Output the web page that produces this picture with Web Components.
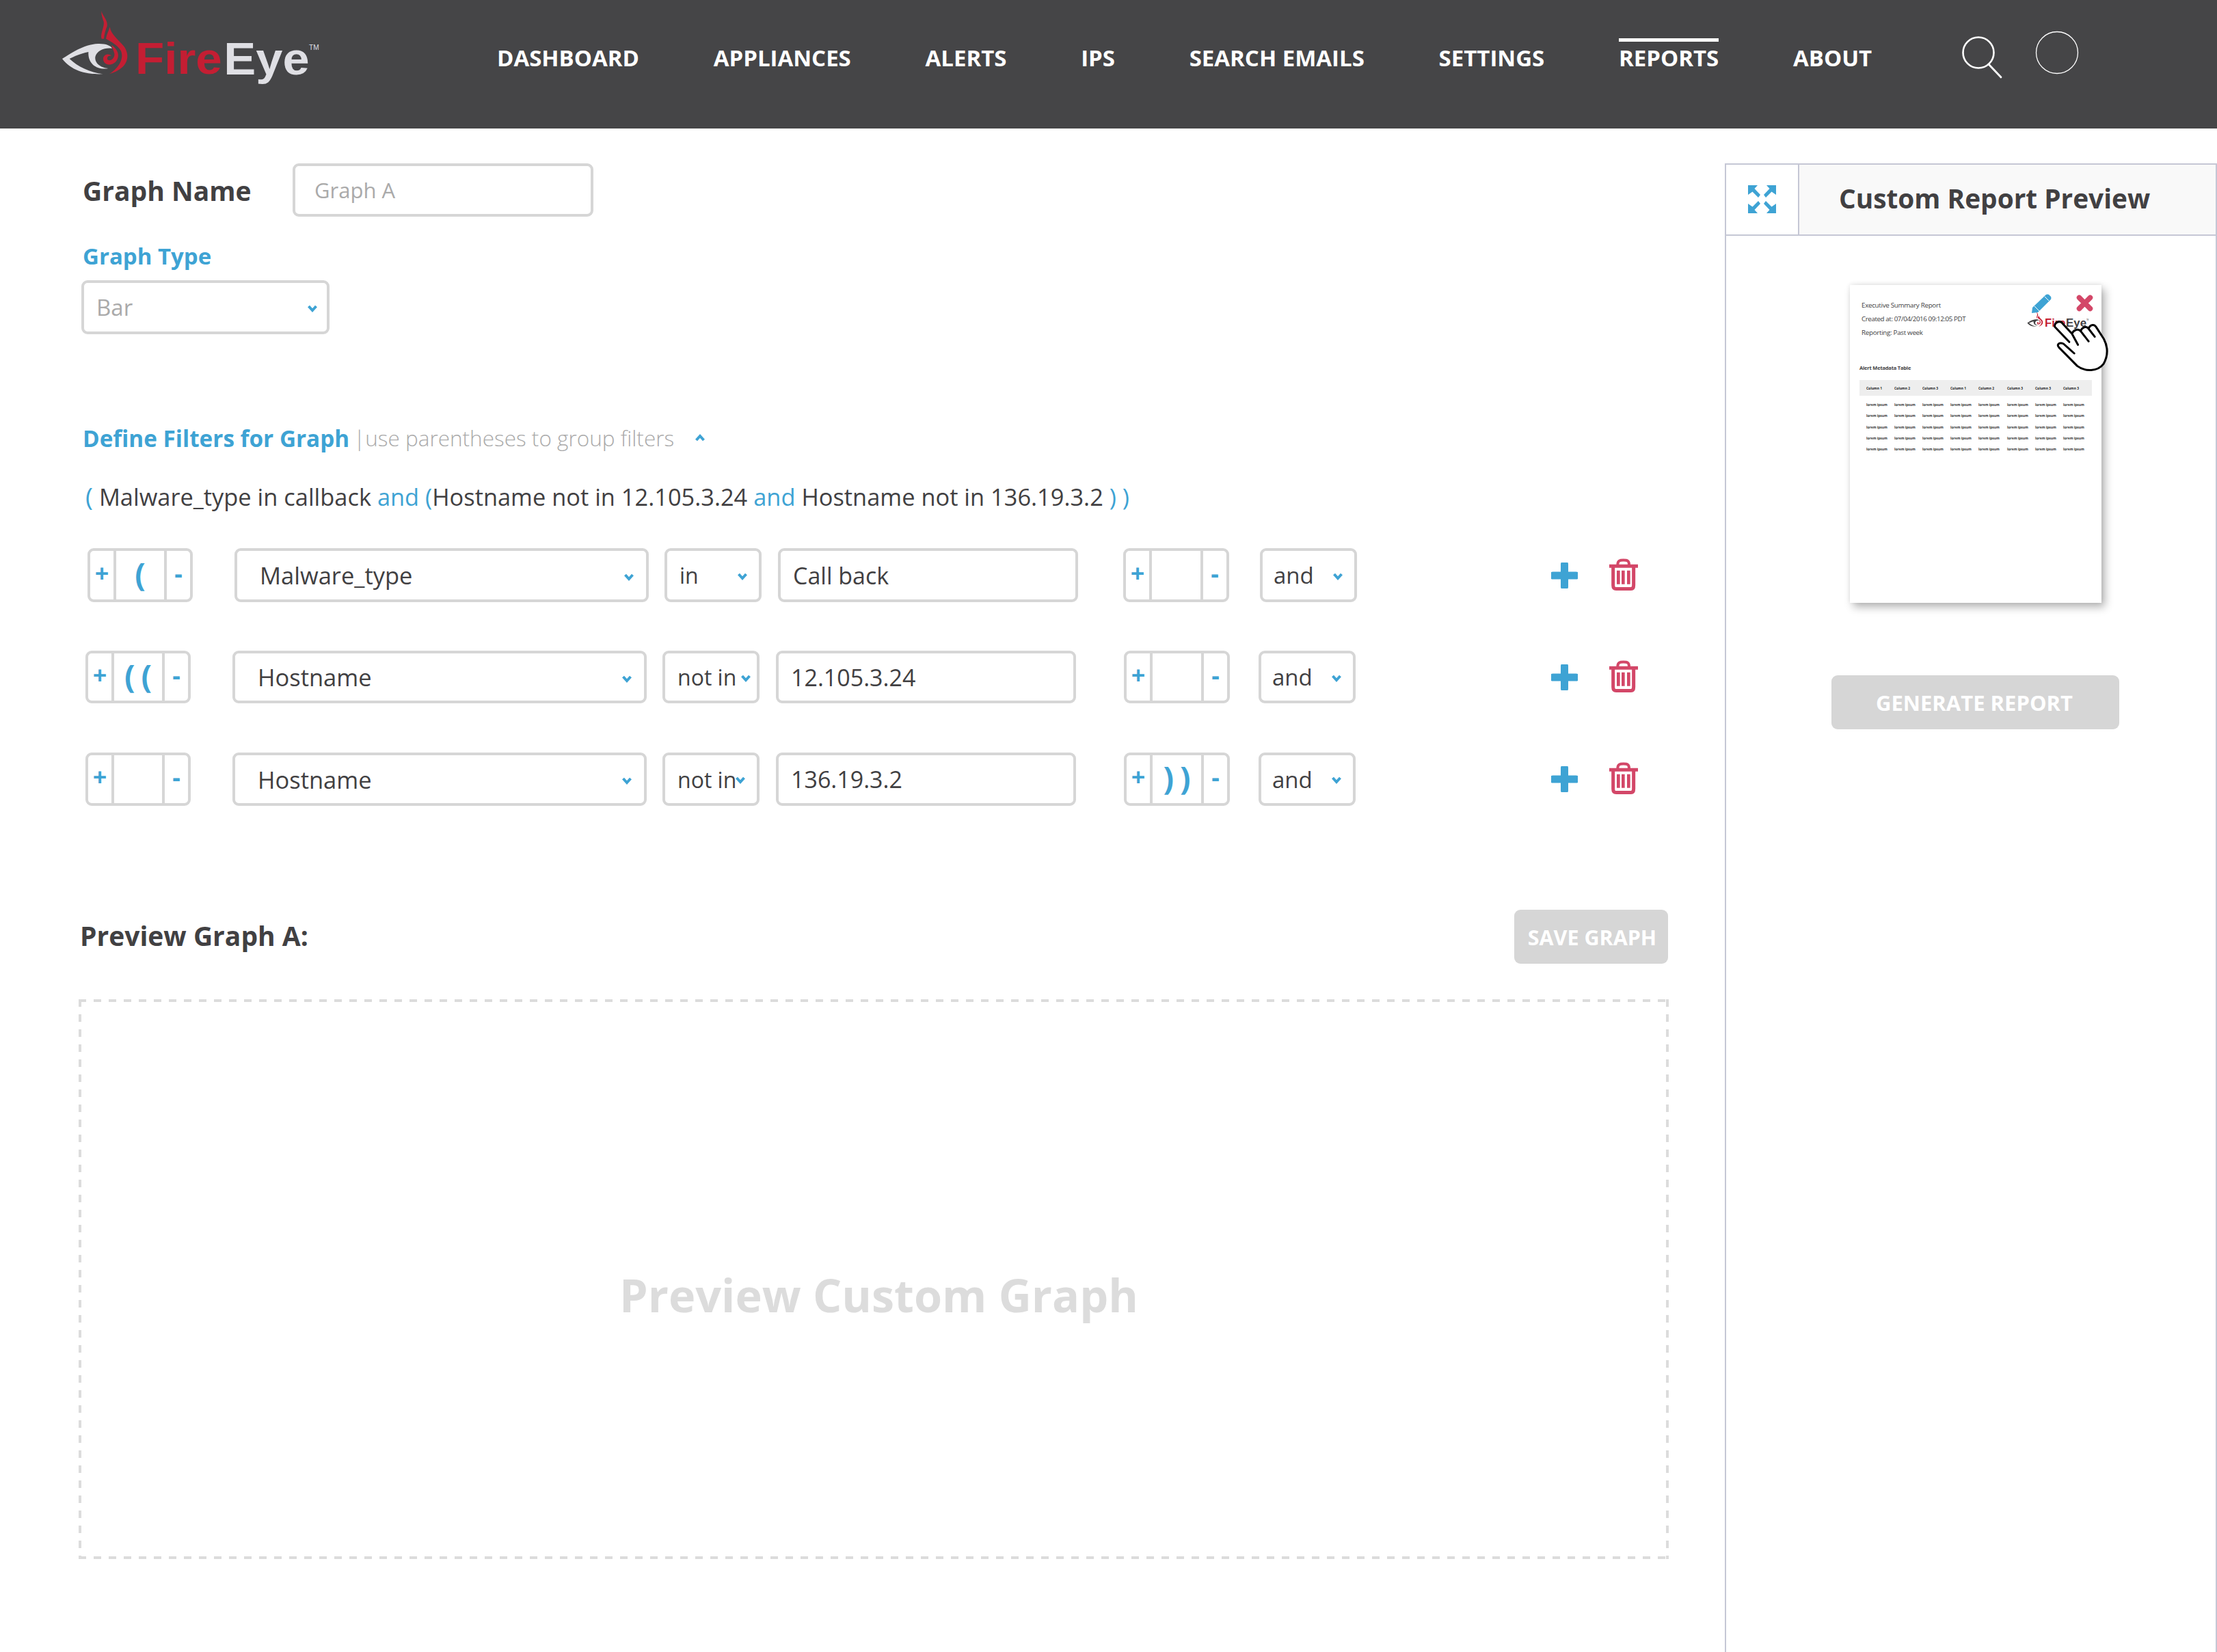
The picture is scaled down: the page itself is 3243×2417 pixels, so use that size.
<!DOCTYPE html>
<html>
<head>
<meta charset="utf-8">
<title>Custom Graph</title>
<style>
  html, body { margin: 0; padding: 0; height: 100%; background: #fff; overflow: hidden; }
  body { font-family: "Open Sans", "Liberation Sans", sans-serif; color: #414042; }
  .page { display: flex; height: calc(100vh - 188px); }
</style>
</head>
<body>
<fe-header></fe-header>
<div class="page">
  <fe-builder>
    <fe-filter-row indent="13" g1="66" g2="45" open="(" field="Malware_type" op="in" value="Call back" close="" top="0" h="79"></fe-filter-row>
    <fe-filter-row indent="10" g1="70" g2="42" open="((" field="Hostname" op="not in" caret="20" value="12.105.3.24" close="" top="71" h="77"></fe-filter-row>
    <fe-filter-row indent="10" g1="70" g2="42" open="" field="Hostname" op="not in" caret="28" value="136.19.3.2" close="))" top="72" h="78"></fe-filter-row>
  </fe-builder>
  <fe-preview-panel></fe-preview-panel>
</div>

<script>
// shared bits
const FONT = `"Open Sans", "Liberation Sans", sans-serif`;
const BLUE = '#3ea3d4';
const CHEVRON = `<svg width="14" height="11" viewBox="0 0 14 11"><path d="M1.5 2 L7 8 L12.5 2" fill="none" stroke="${BLUE}" stroke-width="4"/></svg>`;

class FeLogo extends HTMLElement {
  constructor() {
    super();
    this.attachShadow({ mode: 'open' });
    const eye = this.getAttribute('eye') || '#dfdfe4';
    const w = this.getAttribute('width') || 430;
    this.shadowRoot.innerHTML = `
      <style>
        :host { display: block; line-height: 0; }
        text { font-family: "Liberation Sans", Arial, sans-serif; }
      </style>
      <svg width="${w}" height="${w * 150 / 430}" viewBox="0 0 1290 450">
        <path fill="${eye}" d="M93 258 C130 235 185 195 250 192 C285 191 305 200 312 212 C280 208 245 220 238 250 C235 278 262 298 295 300 C250 308 205 285 208 228 C170 236 145 248 125 258 C160 292 215 318 272 325 C200 328 135 312 93 258Z"/>
        <path fill="#c41e33" d="M265 48 C270 70 295 90 290 115 C282 135 278 150 276 170 L266 170 C258 150 280 115 275 95 C270 80 264 65 265 48Z"/>
        <path fill="#c41e33" d="M302 118 C306 150 340 175 365 205 C392 245 385 300 300 325 C345 295 365 255 350 222 C335 195 300 180 285 170 C288 150 298 135 302 118Z"/>
        <path fill="#c41e33" d="M310 198 C335 215 345 240 335 260 C320 292 275 290 273 260 C272 240 295 232 310 245 C295 242 288 252 292 262 C305 272 325 255 322 235 C318 220 312 210 310 198Z"/>
        <text x="414" y="325" font-size="196" font-weight="700" textLength="380" lengthAdjust="spacingAndGlyphs" fill="#c41e33">Fire</text>
        <text x="802" y="328" font-size="202" font-weight="700" textLength="376" lengthAdjust="spacingAndGlyphs" fill="${eye}">Eye</text>
        <text x="1176" y="218" font-size="32" textLength="44" lengthAdjust="spacingAndGlyphs" fill="${eye}">TM</text>
      </svg>`;
  }
}
customElements.define('fe-logo', FeLogo);

class FeHeader extends HTMLElement {
  constructor() {
    super();
    this.attachShadow({ mode: 'open' });
    const items = ['DASHBOARD', 'APPLIANCES', 'ALERTS', 'IPS', 'SEARCH EMAILS', 'SETTINGS', 'REPORTS', 'ABOUT'];
    this.shadowRoot.innerHTML = `
      <style>
        :host { display: flex; height: 188px; background: #454547; color: #fff; font-family: ${FONT}; }
        fe-logo { margin-left: 60px; width: 430px; flex: none; }
        nav { display: flex; gap: 108.7px; margin-left: 237px; }
        a { display: block; height: 188px; box-sizing: border-box; padding-top: 62px; font-size: 33px; font-weight: 700; line-height: 46px; white-space: nowrap; position: relative; }
        a.on::before { content: ""; position: absolute; left: 0; right: 0; top: 56px; height: 5px; background: #fff; }
        .icons { display: flex; align-items: flex-start; margin-left: 132px; gap: 47px; padding-top: 45px; }
        svg { display: block; }
      </style>
      <fe-logo></fe-logo>
      <nav>${items.map(t => `<a class="${t === 'REPORTS' ? 'on' : ''}">${t}</a>`).join('')}</nav>
      <div class="icons">
        <svg width="60" height="68" viewBox="0 0 60 68" style="margin-top:8px"><circle cx="24" cy="24" r="22.5" fill="none" stroke="#fff" stroke-width="2.6"/><path d="M39 41 L57 60" stroke="#fff" stroke-width="2.8" stroke-linecap="round"/></svg>
        <svg width="64" height="64" viewBox="0 0 64 64"><circle cx="32" cy="32" r="30.5" fill="none" stroke="#fff" stroke-width="1.3"/></svg>
      </div>`;
  }
}
customElements.define('fe-header', FeHeader);

// boxed control: text input look, caret is optional
class FeBox extends HTMLElement {
  constructor() {
    super();
    this.attachShadow({ mode: 'open' });
    const caret = this.getAttribute('caret');
    this.shadowRoot.innerHTML = `
      <style>
        :host { display: flex; align-items: center; box-sizing: border-box; position: relative; border: 4px solid #d6d6d6; border-radius: 9px; background: #fff; font-size: 34.5px; color: #414042; white-space: nowrap; }
        span { position: absolute; top: 50%; margin-top: -5px; line-height: 0; }
      </style>
      <slot></slot>
      ${caret ? `<span style="right:${caret - 11}px">${CHEVRON}</span>` : ''}`;
  }
}
customElements.define('fe-box', FeBox);

class FeStepper extends HTMLElement {
  constructor() {
    super();
    this.attachShadow({ mode: 'open' });
    const v = this.getAttribute('value') || '';
    this.shadowRoot.innerHTML = `
      <style>
        :host { display: grid; grid-template-columns: 34px 1fr 34px; box-sizing: border-box; width: 154px; border: 4px solid #d6d6d6; border-radius: 9px; color: ${BLUE}; font-weight: 700; background: #fff; }
        div { display: flex; align-items: center; justify-content: center; font-size: 36px; line-height: 1; padding-bottom: 6px; }
        .mid { border-left: 4px solid #d6d6d6; border-right: 4px solid #d6d6d6; font-size: 46px; font-weight: 700; letter-spacing: 9px; padding-bottom: 6px; text-indent: 9px; }
      </style>
      <div>+</div><div class="mid">${v}</div><div>-</div>`;
  }
}
customElements.define('fe-stepper', FeStepper);

class FeFilterRow extends HTMLElement {
  constructor() {
    super();
    this.attachShadow({ mode: 'open' });
    const a = n => this.getAttribute(n) || '';
    const caret = a('caret') || 28;
    this.shadowRoot.innerHTML = `
      <style>
        :host { display: flex; align-items: stretch; height: ${a('h')}px; margin-top: ${a('top')}px; margin-left: ${a('indent')}px; padding-right: 45px; }
        .field { width: 606px; margin-left: 61px; padding-left: 33px; }
        .op { width: 142px; margin-left: 23px; padding-left: 18px; font-size: 32px; }
        .val { width: 439px; margin-left: 24px; padding-left: 18px; font-size: 34px; }
        .close { width: 155px; margin-left: ${a('g1')}px; }
        .join { width: 142px; margin-left: ${a('g2')}px; padding-left: 16px; font-size: 33px; }
        .acts { margin-left: auto; display: flex; align-items: center; gap: 46px; }
        svg { display: block; }
      </style>
      <fe-stepper value="${a('open')}"></fe-stepper>
      <fe-box class="field" caret="29">${a('field')}</fe-box>
      <fe-box class="op" caret="${caret}">${a('op')}</fe-box>
      <fe-box class="val">${a('value')}</fe-box>
      <fe-stepper class="close" value="${a('close')}"></fe-stepper>
      <fe-box class="join" caret="28">and</fe-box>
      <div class="acts">
        <svg width="39" height="38" viewBox="0 0 39 38"><path d="M19.5 2.5 V35.5 M2.5 19 H36.5" stroke="${BLUE}" stroke-width="11" stroke-linecap="round" stroke-linejoin="round"/></svg>
        <svg width="42" height="47" viewBox="462 115 126 140" fill="none" stroke="#d34768" style="margin-top:-3px">
          <path d="M462 148 H588" stroke-width="15"/>
          <path d="M499 142 C499 124 508 122 524 122 C541 122 549 124 549 142" stroke-width="12"/>
          <path d="M479 148 V232 Q479 248 492 248 H558 Q569 248 569 232 V148" stroke-width="15"/>
          <path d="M502 168 V228 M523 168 V228 M547 168 V228" stroke-width="14"/>
        </svg>
      </div>`;
  }
}
customElements.define('fe-filter-row', FeFilterRow);

class FeButton extends HTMLElement {
  constructor() {
    super();
    this.attachShadow({ mode: 'open' });
    this.shadowRoot.innerHTML = `
      <style>
        :host { display: flex; align-items: center; justify-content: center; box-sizing: border-box; background: #d6d6d6; border-radius: 9px; color: #fff; font-weight: 700; font-size: 30.5px; white-space: nowrap; }
      </style>
      <slot></slot>`;
  }
}
customElements.define('fe-button', FeButton);

class FeBuilder extends HTMLElement {
  constructor() {
    super();
    this.attachShadow({ mode: 'open' });
    const dash = (dir) => `repeating-linear-gradient(${dir}, #dcdcdc 0 11px, transparent 11px 22px)`;
    this.shadowRoot.innerHTML = `
      <style>
        :host { display: block; box-sizing: border-box; width: 2326px; margin-left: 115px; flex: none; font-family: ${FONT}; color: #414042; }
        .name { display: flex; align-items: center; margin-top: 51px; margin-left: 6px; height: 78px; }
        .name b { font-size: 39px; font-weight: 700; width: 307px; }
        .name fe-box { width: 440px; height: 78px; padding-left: 28px; font-size: 31px; color: #aaa; }
        .type { margin: 38px 0 0 6px; font-size: 33px; font-weight: 700; color: ${BLUE}; line-height: 40px; height: 40px; }
        .sel { margin: 15px 0 0 4px; width: 363px; height: 79px; padding-left: 18px; color: #aaa; font-size: 33px; }
        .filters { display: flex; align-items: center; margin: 132px 0 0 6px; height: 40px; font-size: 33.3px; line-height: 40px; }
        .filters b { color: ${BLUE}; font-weight: 700; }
        .filters span { color: #aaa; font-weight: 300; font-size: 31.5px; margin-left: 6px; }
        .filters i { display: block; margin-left: 31px; line-height: 0; transform: rotate(180deg); }
        .sum { margin: 45px 0 0 10px; height: 40px; line-height: 40px; font-size: 34.4px; white-space: nowrap; }
        .sum u { text-decoration: none; color: ${BLUE}; }
        .sum u:first-child { margin-right: 9px; font-size: 37px; }
        .rows { margin-top: 56px; display: block; }
        .pv { display: flex; align-items: center; justify-content: space-between; margin-top: 152px; margin-left: 2px; height: 79px; }
        .pv b { font-size: 39px; font-weight: 700; padding-bottom: 5px; }
        .pv fe-button { width: 225px; height: 79px; margin-right: 1px; padding-left: 3px; box-sizing: border-box; }
        .box { margin-top: 52px; height: 819px; box-sizing: border-box; padding: 44px 0 0 15px; display: flex; align-items: center; justify-content: center; font-size: 66.5px; font-weight: 700; color: #dcdcdc;
          background:
            ${dash('90deg')} left top / 100% 4px no-repeat,
            ${dash('90deg')} left bottom / 100% 4px no-repeat,
            ${dash('180deg')} left top / 4px 100% no-repeat,
            ${dash('180deg')} right top / 4px 100% no-repeat; }
      </style>
      <div class="name"><b>Graph Name</b><fe-box>Graph A</fe-box></div>
      <div class="type">Graph Type</div>
      <fe-box class="sel" caret="25">Bar</fe-box>
      <div class="filters"><b>Define Filters for Graph</b><span>|use parentheses to group filters</span><i>${CHEVRON}</i></div>
      <div class="sum"><u>(</u>Malware_type in callback <u>and (</u>Hostname not in 12.105.3.24 <u>and</u> Hostname not in 136.19.3.2 <u>) )</u></div>
      <div class="rows"><slot></slot></div>
      <div class="pv"><b>Preview Graph A:</b><fe-button>SAVE GRAPH</fe-button></div>
      <div class="box">Preview Custom Graph</div>`;
  }
}
customElements.define('fe-builder', FeBuilder);

// miniature of the report page, with the edit/remove overlays
class FeReportThumb extends HTMLElement {
  constructor() {
    super();
    this.attachShadow({ mode: 'open' });
    const heads = ['Column 1', 'Column 2', 'Column 3', 'Column 1', 'Column 2', 'Column 3', 'Column 3', 'Column 3'];
    const row = `<div class="tr">${heads.map(() => '<span>lorem ipsum</span>').join('')}</div>`;
    this.shadowRoot.innerHTML = `
      <style>
        :host { display: block; position: relative; width: 368px; height: 465px; box-sizing: border-box; background: #fff; box-shadow: 5px 6px 12px rgba(0,0,0,.3), 0 -1px 6px rgba(0,0,0,.08); padding: 20px 14px 0; color: #414042; }
        .meta { margin-left: 3px; font-size: 9.8px; line-height: 20px; height: 20px; white-space: nowrap; letter-spacing: -.3px; }
        .meta + .meta { letter-spacing: -.42px; }
        .meta + .meta + .meta { letter-spacing: -.3px; }
        .ttl { margin-top: 35px; font-size: 7.5px; font-weight: 700; line-height: 12px; white-space: nowrap; letter-spacing: -.2px; }
        .th, .tr { display: grid; grid-template-columns: 41px 41px 41px 41px 42px 41px 41px 41px; padding-left: 10px; font-size: 4.9px; font-weight: 700; }
        .th { margin-top: 12px; height: 23px; align-items: center; background: #eee; margin-bottom: 5px; color: #222; }
        .tr { height: 16.3px; align-items: center; white-space: nowrap; color: #333; }
        .abs { position: absolute; }
        svg { display: block; }
      </style>
      <div class="meta">Executive Summary Report</div>
      <div class="meta">Created at: 07/04/2016 09:12:05 PDT</div>
      <div class="meta">Reporting: Past week</div>
      <div class="ttl">Alert Metadata Table</div>
      <div class="th">${heads.map(h => `<span>${h}</span>`).join('')}</div>
      ${row.repeat(5)}
      <fe-logo class="abs" width="103" eye="#414042" style="left:252px;top:35px"></fe-logo>
      <svg class="abs" style="left:266px;top:13px" width="29" height="29" viewBox="0 0 29 29"><path d="M0 28 L1 20 L21 1 Q23 0 25 1 L28 4 Q29 6 28 8 L9 27 Z" fill="${BLUE}"/><path d="M4 18 L11 25 M19 4 L25 10" stroke="#fff" stroke-width="1"/></svg>
      <svg class="abs" style="left:331px;top:14px" width="25" height="25" viewBox="0 0 25 25"><path d="M4.5 4.5 L20.5 20.5 M20.5 4.5 L4.5 20.5" stroke="#d34768" stroke-width="7.5" stroke-linecap="round"/></svg>
      <svg class="abs" style="left:294px;top:49px" width="87" height="80" viewBox="360 195 260 240"><path d="M377 232 C372 212 400 200 412 218 L452 262 C458 245 478 238 490 250 C495 235 515 225 525 240 C530 222 548 218 558 232 L592 285 C610 320 610 360 590 395 C565 428 510 430 475 403 L395 322 C382 308 398 298 415 306 L462 348 L420 300 L445 298 Z" fill="#fff"/><path d="M377 232 C372 212 400 200 412 218 L452 262 C458 245 478 238 490 250 C495 235 515 225 525 240 C530 222 548 218 558 232 L592 285 C610 320 610 360 590 395 C565 428 510 430 475 403 L395 322 C382 308 398 298 415 306 L462 348 M377 232 L440 298 M452 262 L478 310 M490 250 L525 295 M525 240 L552 275" fill="none" stroke="#000" stroke-width="9" stroke-linejoin="round" stroke-linecap="round"/></svg>`;
  }
}
customElements.define('fe-report-thumb', FeReportThumb);

class FePreviewPanel extends HTMLElement {
  constructor() {
    super();
    this.attachShadow({ mode: 'open' });
    const arrow = t => `<path transform="${t}" d="M0 0 H14 L9.5 5 L18 14 L15 18 L6.5 9.5 L0 14 Z"/>`;
    this.shadowRoot.innerHTML = `
      <style>
        :host { display: flex; flex-direction: column; align-items: flex-start; box-sizing: border-box; width: 720px; margin-left: 82px; margin-top: 51px; flex: none; border: solid #c5c7d5; border-width: 2px 2px 0 2px; font-family: ${FONT}; }
        .head { display: flex; width: 100%; height: 102px; flex: none; border-bottom: 2px solid #c5c7d5; }
        .ic { width: 107px; display: flex; align-items: center; justify-content: center; border-right: 2px solid #c5c7d5; padding-bottom: 2px; box-sizing: border-box; flex: none; }
        .t { flex: 1; display: flex; align-items: center; padding: 0 0 4px 58px; background: #f9f9f9; font-size: 38.8px; font-weight: 700; color: #414042; white-space: nowrap; }
        fe-report-thumb { margin: 72px 0 0 181px; }
        fe-button { width: 421px; height: 79px; margin: 106px 0 0 154px; padding-right: 3px; box-sizing: border-box; font-size: 31px; }
      </style>
      <div class="head">
        <div class="ic"><svg width="41" height="41" viewBox="0 0 41 41" fill="${BLUE}">${arrow('')}${arrow('translate(41 0) scale(-1 1)')}${arrow('translate(0 41) scale(1 -1)')}${arrow('translate(41 41) scale(-1 -1)')}</svg></div>
        <div class="t">Custom Report Preview</div>
      </div>
      <fe-report-thumb></fe-report-thumb>
      <fe-button>GENERATE REPORT</fe-button>`;
  }
}
customElements.define('fe-preview-panel', FePreviewPanel);
</script>
</body>
</html>
